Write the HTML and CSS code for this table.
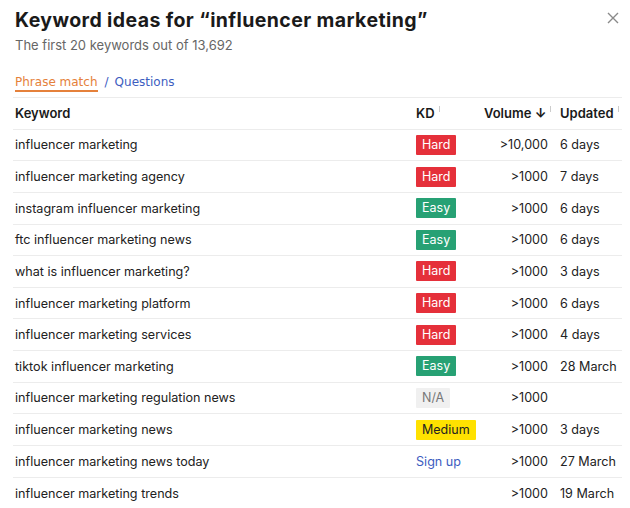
FILE: index.html
```html
<!DOCTYPE html>
<html>
<head>
<meta charset="utf-8">
<link rel="stylesheet" href="styles.css">
</head>
<body>
<div class="panel">
  <div class="head">
    <h1 class="title">Keyword ideas for “influencer marketing”</h1>
    <svg class="close" width="12" height="12" viewBox="0 0 12 12"><path d="M1 1L11 11M11 1L1 11" stroke="#8a8a8a" stroke-width="1.4" fill="none"/></svg>
  </div>
  <div class="sub">The first 20 keywords out of 13,692</div>
  <div class="tabs"><span class="tab active">Phrase match</span><span class="slash">/</span><span class="tab link">Questions</span></div>
  <div class="table">
    <div class="row hdr">
      <div class="c kw">Keyword</div>
      <div class="c kd">KD<span class="tick"></span></div>
      <div class="c vol">Volume <span class="arrow">↓</span><span class="tick"></span></div>
      <div class="c upd">Updated<span class="tick"></span></div>
    </div>
    <div class="row"><div class="c kw">influencer marketing</div><div class="c kd"><span class="b hard">Hard</span></div><div class="c vol">&gt;10,000</div><div class="c upd">6 days</div></div>
    <div class="row"><div class="c kw">influencer marketing agency</div><div class="c kd"><span class="b hard">Hard</span></div><div class="c vol">&gt;1000</div><div class="c upd">7 days</div></div>
    <div class="row"><div class="c kw">instagram influencer marketing</div><div class="c kd"><span class="b easy">Easy</span></div><div class="c vol">&gt;1000</div><div class="c upd">6 days</div></div>
    <div class="row"><div class="c kw">ftc influencer marketing news</div><div class="c kd"><span class="b easy">Easy</span></div><div class="c vol">&gt;1000</div><div class="c upd">6 days</div></div>
    <div class="row"><div class="c kw">what is influencer marketing?</div><div class="c kd"><span class="b hard">Hard</span></div><div class="c vol">&gt;1000</div><div class="c upd">3 days</div></div>
    <div class="row"><div class="c kw">influencer marketing platform</div><div class="c kd"><span class="b hard">Hard</span></div><div class="c vol">&gt;1000</div><div class="c upd">6 days</div></div>
    <div class="row"><div class="c kw">influencer marketing services</div><div class="c kd"><span class="b hard">Hard</span></div><div class="c vol">&gt;1000</div><div class="c upd">4 days</div></div>
    <div class="row"><div class="c kw">tiktok influencer marketing</div><div class="c kd"><span class="b easy">Easy</span></div><div class="c vol">&gt;1000</div><div class="c upd">28 March</div></div>
    <div class="row"><div class="c kw">influencer marketing regulation news</div><div class="c kd"><span class="b na">N/A</span></div><div class="c vol">&gt;1000</div><div class="c upd"></div></div>
    <div class="row"><div class="c kw">influencer marketing news</div><div class="c kd"><span class="b med">Medium</span></div><div class="c vol">&gt;1000</div><div class="c upd">3 days</div></div>
    <div class="row"><div class="c kw">influencer marketing news today</div><div class="c kd"><span class="signup">Sign up</span></div><div class="c vol">&gt;1000</div><div class="c upd">27 March</div></div>
    <div class="row"><div class="c kw">influencer marketing trends</div><div class="c kd"></div><div class="c vol">&gt;1000</div><div class="c upd">19 March</div></div>
  </div>
</div>
</body>
</html>
```
FILE: styles.css
```css
html, body { margin: 0; padding: 0; background: #fff; }
body { font-family: Inter, "Noto Sans", sans-serif; color: #222; }
.panel { padding: 0 8px 0 13px; }
.head { display: flex; justify-content: space-between; align-items: flex-start; padding-top: 7px; }
.title { margin: 0 0 0 2px; font-family: Inter, sans-serif; font-weight: 700; font-size: 19.5px; line-height: 26px; color: #1a1a1a; letter-spacing: 0.4px; }
.close { margin-top: 5px; margin-right: 3px; }
.sub { margin: 3px 0 0 2px; font-size: 13px; color: #666; line-height: 18px; }
.tabs { margin: 19px 0 0 2px; font-family: "DejaVu Sans", sans-serif; font-size: 12px; line-height: 18px; height: 24px; }
.tab.active { color: #e5813b; border-bottom: 2px solid #e5813b; padding-bottom: 1px; }
.slash { color: #3d5dbf; margin: 0 6px 0 7px; }
.tab.link { color: #3d5dbf; }
.table { border-top: 1px solid #ececec; }
.row { display: grid; grid-template-columns: 401px 70px 66px 1fr; height: 31.64px; box-sizing: border-box; border-bottom: 1px solid #ececec; align-items: center; font-size: 12.6px; }
.row:last-child { border-bottom: none; }
.c { white-space: nowrap; }
.kw { padding-left: 2px; }
.kd { padding-left: 2px; }
.vol { text-align: right; padding-right: 2px; }
.upd { padding-left: 10px; }
.hdr { font-weight: 600; color: #1a1a1a; font-size: 13px; }
.arrow { font-weight: 700; }
.tick { display: inline-block; width: 1px; height: 6px; background: #ccc; margin-left: 4px; vertical-align: 6px; }
.b { display: inline-block; padding: 0 6px; height: 20px; line-height: 20px; font-size: 12.5px; border-radius: 1px; }
.hard { background: #e5303a; color: #fff; }
.easy { background: #27a174; color: #fff; }
.med { background: #ffe100; color: #222; }
.na { background: #f0f0f0; color: #777; }
.signup { color: #3d5dbf; }
```
